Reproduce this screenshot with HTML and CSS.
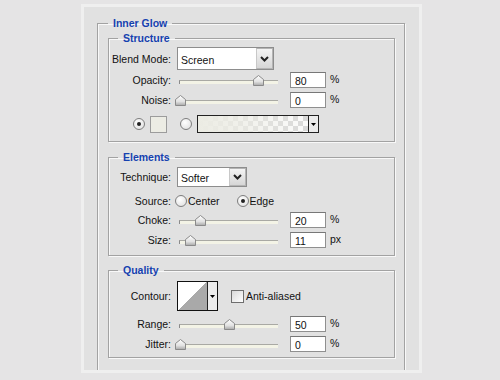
FILE: index.html
```html
<!DOCTYPE html>
<html lang="en">
<head>
    <meta charset="UTF-8">
    <title>Inner Glow</title>
    <link rel="stylesheet" href="styles.css">
</head>
<body>

<div class="panel">
    <fieldset class="group outer">
        <legend>Inner Glow</legend>

        <!-- Structure -->
        <fieldset class="group structure">
            <legend>Structure</legend>
            <div class="row row-blend">
                <span class="label">Blend Mode:</span>
                <div class="select select-blend">
                    <span class="select-text">Screen</span>
                    <span class="select-btn"><svg width="9" height="6" viewBox="0 0 9 6"><path d="M1 1 L4.5 4.5 L8 1" fill="none" stroke="#222" stroke-width="2"/></svg></span>
                </div>
            </div>
            <div class="row row-slider gap-2">
                <span class="label">Opacity:</span>
                <div class="slider"><div class="track"><span class="thumb" style="left: 80%"><svg width="11" height="11" viewBox="0 0 11 11"><polygon points="0.5,4.5 5.5,0.5 10.5,4.5 10.5,10.5 0.5,10.5" fill="url(#tg)" stroke="#8a8a8a"/></svg></span></div></div>
                <div class="field">80</div>
                <span class="unit">%</span>
            </div>
            <div class="row row-slider gap-4">
                <span class="label">Noise:</span>
                <div class="slider"><div class="track"><span class="thumb" style="left: 0%"><svg width="11" height="11" viewBox="0 0 11 11"><polygon points="0.5,4.5 5.5,0.5 10.5,4.5 10.5,10.5 0.5,10.5" fill="url(#tg)" stroke="#8a8a8a"/></svg></span></div></div>
                <div class="field">0</div>
                <span class="unit">%</span>
            </div>
            <div class="row row-color">
                <span class="radio checked"></span>
                <span class="swatch"></span>
                <span class="radio"></span>
                <div class="gradient">
                    <span class="gradient-preview"></span>
                    <span class="drop"><svg width="5" height="3" viewBox="0 0 5 3"><polygon points="0,0 5,0 2.5,3" fill="#000"/></svg></span>
                </div>
            </div>
        </fieldset>

        <!-- Elements -->
        <fieldset class="group elements">
            <legend>Elements</legend>
            <div class="row row-technique">
                <span class="label">Technique:</span>
                <div class="select select-technique">
                    <span class="select-text">Softer</span>
                    <span class="select-btn"><svg width="9" height="6" viewBox="0 0 9 6"><path d="M1 1 L4.5 4.5 L8 1" fill="none" stroke="#222" stroke-width="2"/></svg></span>
                </div>
            </div>
            <div class="row row-source">
                <span class="label">Source:</span>
                <span class="radio"></span>
                <span class="option">Center</span>
                <span class="radio checked option-edge"></span>
                <span class="option">Edge</span>
            </div>
            <div class="row row-slider gap-5">
                <span class="label">Choke:</span>
                <div class="slider"><div class="track"><span class="thumb" style="left: 20%"><svg width="11" height="11" viewBox="0 0 11 11"><polygon points="0.5,4.5 5.5,0.5 10.5,4.5 10.5,10.5 0.5,10.5" fill="url(#tg)" stroke="#8a8a8a"/></svg></span></div></div>
                <div class="field">20</div>
                <span class="unit">%</span>
            </div>
            <div class="row row-slider gap-4">
                <span class="label">Size:</span>
                <div class="slider"><div class="track"><span class="thumb" style="left: 10%"><svg width="11" height="11" viewBox="0 0 11 11"><polygon points="0.5,4.5 5.5,0.5 10.5,4.5 10.5,10.5 0.5,10.5" fill="url(#tg)" stroke="#8a8a8a"/></svg></span></div></div>
                <div class="field">11</div>
                <span class="unit">px</span>
            </div>
        </fieldset>

        <!-- Quality -->
        <fieldset class="group quality">
            <legend>Quality</legend>
            <div class="row row-contour">
                <span class="label">Contour:</span>
                <div class="contour">
                    <span class="contour-img"></span>
                    <span class="drop"><svg width="5" height="3" viewBox="0 0 5 3"><polygon points="0,0 5,0 2.5,3" fill="#000"/></svg></span>
                </div>
                <span class="checkbox"></span>
                <span class="option">Anti-aliased</span>
            </div>
            <div class="row row-slider gap-5">
                <span class="label">Range:</span>
                <div class="slider"><div class="track"><span class="thumb" style="left: 50%"><svg width="11" height="11" viewBox="0 0 11 11"><polygon points="0.5,4.5 5.5,0.5 10.5,4.5 10.5,10.5 0.5,10.5" fill="url(#tg)" stroke="#8a8a8a"/></svg></span></div></div>
                <div class="field">50</div>
                <span class="unit">%</span>
            </div>
            <div class="row row-slider gap-4">
                <span class="label">Jitter:</span>
                <div class="slider"><div class="track"><span class="thumb" style="left: 0%"><svg width="11" height="11" viewBox="0 0 11 11"><polygon points="0.5,4.5 5.5,0.5 10.5,4.5 10.5,10.5 0.5,10.5" fill="url(#tg)" stroke="#8a8a8a"/></svg></span></div></div>
                <div class="field">0</div>
                <span class="unit">%</span>
            </div>
        </fieldset>
    </fieldset>
</div>

<!-- shared gradient for slider thumbs -->
<svg class="defs" width="0" height="0">
    <defs>
        <linearGradient id="tg" x1="0" y1="0" x2="0" y2="1">
            <stop offset="0" stop-color="#ffffff"/>
            <stop offset="0.6" stop-color="#e2e2e2"/>
            <stop offset="1" stop-color="#a8a8a8"/>
        </linearGradient>
    </defs>
</svg>

</body>
</html>
```

FILE: styles.css
```css
/* Global */
* {
    box-sizing: border-box;
}

body {
    margin: 0;
    background: #e5e4e5;
    font-family: "Liberation Sans", Arial, sans-serif;
    font-size: 10.5px;
    color: #111;
}

.defs {
    position: absolute;
}

/* Outer panel */
.panel {
    width: 341px;
    height: 369px;
    margin: 4px 0 0 81px;
    border: 3px solid #efefef;
    background: #e1e1e1;
    overflow: hidden;
}

/* Groups */
.group {
    margin: 0;
    min-width: 0;
    border: 1px solid #a2a2a2;
    box-shadow: inset 1px 1px 0 #f8f8f8, 1px 1px 0 #f8f8f8;
}

.group legend {
    padding: 0 5px;
    margin-left: 9px;
    font-weight: bold;
    line-height: 14px;
    color: #1541b0;
}

.outer {
    width: 308px;
    margin: 9px 0 0 13px;
    padding: 1px 9px 30px 10px;
}

.outer > legend {
    margin-left: 0;
}

.structure {
    padding: 2px 0 8px;
}

.elements {
    margin-top: 8px;
    padding: 3px 0 7px;
}

.quality {
    margin-top: 7px;
    padding: 4px 0 5px;
}

/* Rows */
.row {
    display: flex;
    align-items: center;
}

.label {
    flex: none;
    width: 62px;
    margin-right: 6px;
    text-align: right;
}

.row-blend {
    height: 23px;
}

.row-slider {
    height: 16px;
}

.gap-2 { margin-top: 2px; }
.gap-4 { margin-top: 4px; }
.gap-5 { margin-top: 5px; }

/* Select */
.select {
    display: flex;
    align-items: stretch;
    height: 100%;
    background: #fff;
    border: 1px solid #8d8d8d;
}

.select-blend {
    width: 97px;
}

.select-technique {
    width: 70px;
}

.select-text {
    flex: 1;
    display: flex;
    align-items: center;
    padding: 2px 0 0 3px;
}

.select-btn {
    width: 17px;
    display: flex;
    align-items: center;
    justify-content: center;
    background: linear-gradient(#f4f4f4, #d6d6d6);
    border: 1px solid #b4b4b4;
    border-left-color: #c8c8c8;
}

/* Slider */
.slider {
    width: 104px;
    height: 16px;
    padding: 0 3px;
}

.track {
    position: relative;
    height: 16px;
}

.track::before {
    content: "";
    position: absolute;
    left: -1px;
    right: 0;
    top: 8px;
    height: 3px;
    background: #f3f3e6;
    border-top: 1px solid #a9a9a4;
    border-left: 1px solid #8a8a8a;
}

.thumb {
    position: absolute;
    top: 3px;
    width: 11px;
    height: 11px;
    margin-left: -5px;
}

.thumb svg {
    display: block;
}

.field {
    width: 36px;
    height: 16px;
    margin-left: 9px;
    padding: 2px 0 0 4px;
    background: #fff;
    border: 1px solid #8f8f8f;
    border-top-color: #777;
}

.unit {
    margin-left: 4px;
    margin-top: -2px;
}

/* Colour row */
.row-color {
    height: 18px;
    margin-top: 7px;
    padding-left: 24px;
}

.radio {
    position: relative;
    flex: none;
    width: 12px;
    height: 12px;
    border: 1px solid #7e7e7e;
    border-radius: 50%;
    background: radial-gradient(circle at 40% 35%, #ffffff, #dcdcdc);
}

.radio.checked::after {
    content: "";
    position: absolute;
    left: 3px;
    top: 3px;
    width: 4px;
    height: 4px;
    border-radius: 50%;
    background: #222;
}

.swatch {
    width: 17px;
    height: 17px;
    margin: 1px 13px 0 5px;
    background: #ecece4;
    border: 1px solid #9c9c9c;
}

.gradient {
    display: flex;
    width: 122px;
    height: 18px;
    margin-left: 5px;
    border: 1px solid #222;
}

.gradient-preview {
    flex: 1;
    background:
        linear-gradient(to right, #ecece4 0%, rgba(236, 236, 228, 0.7) 40%, rgba(236, 236, 228, 0) 100%),
        conic-gradient(#d9d9d9 25%, #fbfbfb 0 50%, #d9d9d9 0 75%, #fbfbfb 0) 0 0 / 10px 10px;
}

.drop {
    width: 10px;
    display: flex;
    align-items: center;
    justify-content: center;
    background: #ececec;
    border-left: 1px solid #222;
}

/* Elements */
.row-technique {
    height: 20px;
}

.row-source {
    height: 12px;
    margin-top: 8px;
}

.row-source .label {
    margin-right: 4px;
}

.option {
    margin-left: 1px;
}

.option-edge {
    margin-left: 17px;
}

/* Quality */
.row-contour {
    height: 30px;
}

.contour {
    display: flex;
    width: 41px;
    height: 30px;
    border: 1px solid #111;
}

.contour-img {
    flex: 1;
    background: linear-gradient(to bottom right, #fff 50%, #a9a9a9 50%);
}

.checkbox {
    width: 13px;
    height: 13px;
    margin-left: 13px;
    border: 1px solid #6e6e6e;
    background: linear-gradient(135deg, #d8d8d8, #ffffff);
}

.row-contour .option {
    margin-left: 2px;
}
```
